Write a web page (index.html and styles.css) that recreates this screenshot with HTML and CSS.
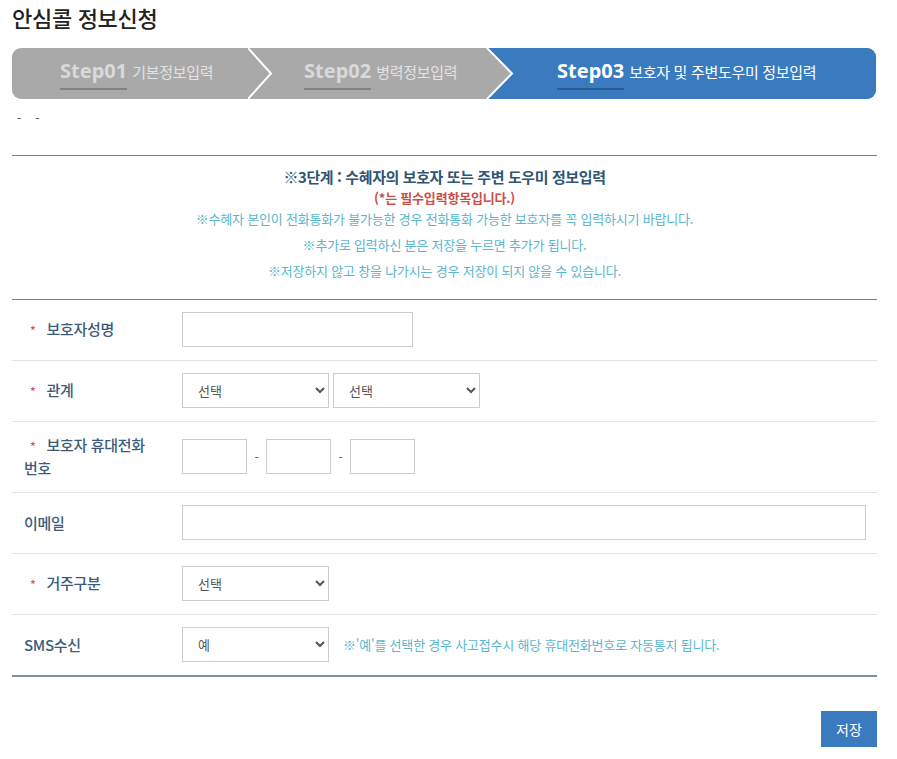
FILE: index.html
```html
<!DOCTYPE html>
<html lang="ko">
<head>
<meta charset="utf-8">
<title>안심콜 정보신청</title>
<link rel="stylesheet" href="styles.css">
</head>
<body>
<div class="page">
  <h1 class="title">안심콜 정보신청</h1>

  <div class="steps">
    <div class="step step1"><span class="step-no">Step01</span><span class="step-name">기본정보입력</span></div>
    <svg class="sep" width="26" height="51" viewBox="0 0 26 51"><polyline points="0,0 23,25.5 0,51" fill="none" stroke="#ffffff" stroke-width="2"/></svg>
    <div class="step step2"><span class="step-no">Step02</span><span class="step-name">병력정보입력</span></div>
    <svg class="sep" width="30" height="51" viewBox="0 0 30 51"><polygon points="2,0 30,0 30,51 2,51 27,25.5" fill="#3a7bbf"/><polyline points="2,0 27,25.5 2,51" fill="none" stroke="#ffffff" stroke-width="2"/></svg>
    <div class="step step3 active"><span class="step-no">Step03</span><span class="step-name">보호자 및 주변도우미 정보입력</span></div>
  </div>

  <div class="dashes"><span>-</span><span>-</span></div>

  <div class="notice">
    <p class="notice-head">※3단계 : 수혜자의 보호자 또는 주변 도우미 정보입력</p>
    <p class="notice-req">(*는 필수입력항목입니다.)</p>
    <p class="notice-info">※수혜자 본인이 전화통화가 불가능한 경우 전화통화 가능한 보호자를 꼭 입력하시기 바랍니다.</p>
    <p class="notice-info">※추가로 입력하신 분은 저장을 누르면 추가가 됩니다.</p>
    <p class="notice-info">※저장하지 않고 창을 나가시는 경우 저장이 되지 않을 수 있습니다.</p>
  </div>

  <div class="form">
    <div class="row">
      <div class="label"><span class="req">*</span> 보호자성명</div>
      <div class="field"><input type="text" class="inp inp-name"></div>
    </div>
    <div class="row">
      <div class="label"><span class="req">*</span> 관계</div>
      <div class="field">
        <select class="sel"><option>선택</option></select>
        <select class="sel"><option>선택</option></select>
      </div>
    </div>
    <div class="row">
      <div class="label"><span class="req">*</span> <span>보호자 휴대전화</span> <span>번호</span></div>
      <div class="field">
        <input type="text" class="inp inp-tel"><span class="dash">-</span><input type="text" class="inp inp-tel"><span class="dash">-</span><input type="text" class="inp inp-tel">
      </div>
    </div>
    <div class="row">
      <div class="label">이메일</div>
      <div class="field field-wide"><input type="text" class="inp inp-mail"></div>
    </div>
    <div class="row">
      <div class="label"><span class="req">*</span> 거주구분</div>
      <div class="field"><select class="sel"><option>선택</option></select></div>
    </div>
    <div class="row row-last">
      <div class="label">SMS수신</div>
      <div class="field">
        <select class="sel"><option>예</option><option>아니오</option></select>
        <span class="sms-note">※'예'를 선택한 경우 사고접수시 해당 휴대전화번호로 자동통지 됩니다.</span>
      </div>
    </div>
  </div>

  <div class="actions">
    <button type="button" class="btn-save">저장</button>
  </div>
</div>
</body>
</html>
```

FILE: styles.css
```css
* { box-sizing: border-box; }

html, body {
  margin: 0;
  padding: 0;
  background: #ffffff;
}

body {
  font-family: "Noto Sans CJK KR", "Noto Sans", sans-serif;
  color: #333333;
}

.page {
  width: 865px;
  margin-left: 12px;
  padding-top: 2px;
}

.title {
  margin: 0;
  font-size: 22px;
  line-height: 30px;
  font-weight: 500;
  color: #222222;
  letter-spacing: -0.3px;
}

/* step bar */
.steps {
  margin-top: 16px;
  width: 864px;
  height: 51px;
  display: flex;
  background: #a9a9a9;
  border-radius: 9px;
  overflow: hidden;
}

.sep { flex: 0 0 auto; display: block; }

.step {
  display: flex;
  align-items: baseline;
  padding-top: 9px;
  white-space: nowrap;
}

.step1 { flex: 0 0 236px; padding-left: 48px; }
.step2 { flex: 0 0 211px; padding-left: 30px; }
.step3 { flex: 1 1 auto; padding-left: 42px; background: #3a7bbf; }

.step-no {
  font-family: "Noto Sans", sans-serif;
  font-size: 20px;
  line-height: 27px;
  font-weight: 700;
  color: #d9d9d9;
  padding-bottom: 4px;
  border-bottom: 2px solid #818181;
}

.step-name {
  margin-left: 5px;
  font-size: 15px;
  color: #e2e2e2;
  letter-spacing: -0.3px;
}

.step3 .step-no { color: #ffffff; border-bottom-color: #2a5b8f; }
.step3 .step-name { color: #ffffff; }

.dashes {
  display: flex;
  gap: 14px;
  margin-top: 11px;
  padding-left: 5px;
  font-size: 12px;
  line-height: 16px;
  color: #444444;
}

/* notice */
.notice {
  margin-top: 29px;
  border-top: 1px solid #6f848e;
  padding: 11px 0 15px;
  text-align: center;
}

.notice p { margin: 0; }

.notice-head {
  font-size: 15px;
  line-height: 20px;
  font-weight: 700;
  color: #2f5573;
  letter-spacing: -0.4px;
}

.notice-req {
  margin-top: 3px !important;
  font-size: 13px;
  line-height: 16px;
  font-weight: 700;
  color: #c9504b;
  letter-spacing: -0.2px;
}

.notice-info {
  font-size: 13px;
  line-height: 26px;
  color: #5bb6cd;
  letter-spacing: -0.2px;
}

/* form */
.form {
  border-top: 1px solid #6f848e;
}

.row {
  display: flex;
  align-items: center;
  padding: 12px 0 13px;
  border-bottom: 1px solid #e3e3e3;
}

.row-last {
  border-bottom: 2px solid #7c9199;
}

.label {
  flex: 0 0 170px;
  padding: 0 24px 0 12px;
  font-size: 15px;
  line-height: 22px;
  font-weight: 500;
  color: #3c5b7b;
  letter-spacing: -0.3px;
}

.req {
  margin-left: 6px;
  margin-right: 7px;
  font-size: 12px;
  color: #d2555a;
}

.field {
  display: flex;
  align-items: center;
  gap: 4px;
}

.field-wide {
  flex: 1 1 auto;
  padding-right: 11px;
}

.inp {
  height: 35px;
  border: 1px solid #cccccc;
  background: #ffffff;
  border-radius: 0;
  padding: 0 8px;
  font-size: 13px;
  font-family: inherit;
  margin: 0;
}

.inp-name { width: 231px; }
.inp-tel { width: 65px; }
.inp-mail { width: 100%; }

.dash {
  width: 15px;
  margin: 0 -2px;
  text-align: center;
  font-size: 12px;
  color: #555555;
}

.sel {
  width: 147px;
  height: 35px;
  border: 1px solid #cccccc;
  border-radius: 0;
  background-color: #ffffff;
  padding: 0 8px 0 11px;
  font-size: 13px;
  font-family: inherit;
  color: #555555;
  margin: 0;
}

.sms-note {
  margin-left: 10px;
  font-size: 13px;
  color: #5bb6cd;
  letter-spacing: -0.2px;
}

/* actions */
.actions {
  display: flex;
  justify-content: flex-end;
  margin-top: 34px;
}

.btn-save {
  width: 56px;
  height: 36px;
  border: none;
  background: #3a7bbf;
  color: #ffffff;
  font-family: inherit;
  font-size: 14px;
  padding: 0;
}
```
